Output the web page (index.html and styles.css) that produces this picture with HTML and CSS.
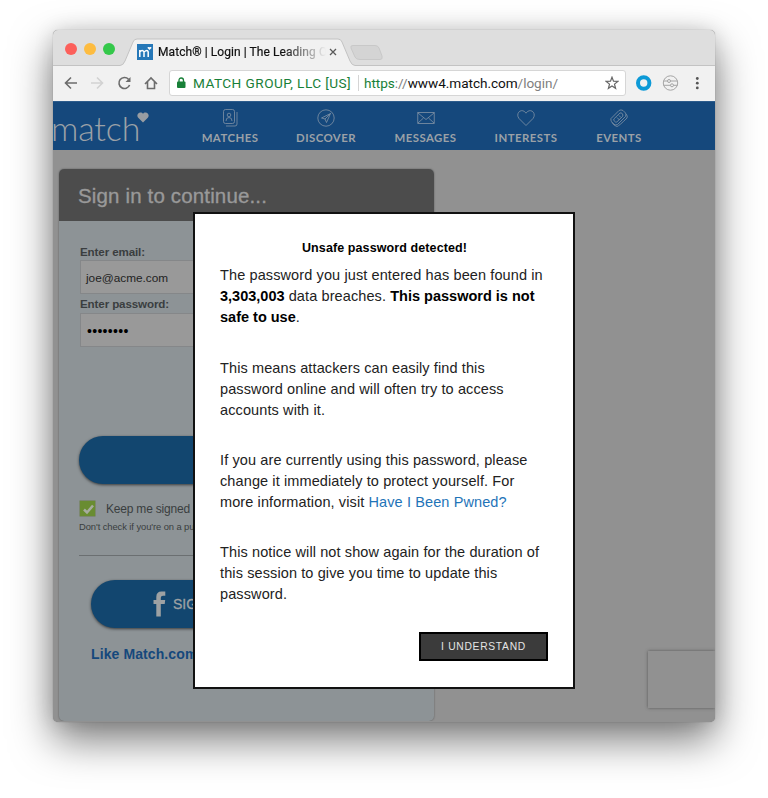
FILE: index.html
```html
<!DOCTYPE html>
<html lang="en">
<head>
<meta charset="utf-8">
<title>Match® | Login</title>
<link rel="stylesheet" href="styles.css">
</head>
<body>
<div class="window">
  <header class="tabs">
    <svg class="tab-shape" width="662" height="36" viewBox="0 0 662 36"><path d="M0 35.5H68C71 35 71 33 72 31L80 12Q81 9 84 9H285Q288 9 289 12L297 31Q299 35.5 302 35.5V36H0Z" fill="#f1f1f1"/><path d="M0 35.5H67Q70 35.500 72 31L80 12Q81 9 84 9H285Q288 9 289 12L297 31Q299 35.500 302 35.500H662" fill="none" stroke="#c3c3c3"/><path d="M300 15.500H322Q325 15.500 326 18L329 26Q330 29.500 327 29.500H307Q303 29.500 302 27L298 18Q297 15.500 300 15.500Z" fill="#d4d4d4" stroke="#c8c8c8"/></svg>
    <i class="dot red"></i><i class="dot yellow"></i><i class="dot green"></i>
    <svg class="favicon" width="16" height="16" viewBox="0 0 16 16"><rect width="16" height="16" fill="#2678b8"/><path d="M2.800 13V6M2.800 8Q5.500 5 7 8V13M7 8Q10.500 5 11.200 8V13" fill="none" stroke="#fff" stroke-width="1.500"/><path d="M12.500 6L10.500 4Q10.500 2.200 12.500 3.300Q14.500 2.200 14.500 4Z" fill="#fff"/></svg>
    <span class="tab-title">Match® | Login | The Leading O</span>
    <svg class="close" width="8" height="8" viewBox="0 0 8 8"><path d="M1 1L7 7M7 1L1 7" stroke="#5a5a5a" stroke-width="1.300"/></svg>
  </header>
  <div class="toolbar">
    <svg class="navicons" width="116" height="35" viewBox="53 66 116 35" fill="none" stroke="#6c6c6c" stroke-width="1.600"><path d="M77 83H65.500M71 77.500L65.500 83L71 88.500"/><path d="M91 83H102.500M97 77.500L102.500 83L97 88.500" stroke="#d2d2d2"/><path d="M128.500 79.200A5.500 5.500 0 1 0 129.600 85"/><path d="M130.500 77V82H125.500Z" fill="#6c6c6c" stroke="none"/><path d="M145 84L151 78L157 84M147.500 82V88.500H154.500V82"/></svg>
    <div class="address">
      <svg width="9" height="12" viewBox="0 0 9 12"><rect y="4.500" width="8.500" height="6.500" rx="1" fill="#188038"/><path d="M2 5V3.500Q2 1 4.250 1Q6.500 1 6.500 3.500V5" fill="none" stroke="#188038" stroke-width="1.300"/></svg>
      <span class="owner">MATCH GROUP, LLC [US]</span>
      <span class="url"><span class="secure">https</span><span class="dim">://</span>www4.match.com<span class="dim">/login/</span></span>
      <svg class="star" width="14" height="14" viewBox="0 0 14 14"><path d="M7 1.200L8.500 5.200L12.800 5.400L9.500 8.100L10.600 12.300L7 9.900L3.400 12.300L4.500 8.100L1.200 5.400L5.500 5.200Z" fill="none" stroke="#666" stroke-width="1.200"/></svg>
    </div>
    <svg class="extensions" width="89" height="35" viewBox="626 66 89 35" fill="none"><circle cx="643.700" cy="83" r="5.700" stroke="#0d9ad7" stroke-width="4"/><g stroke="#a5a5a5"><circle cx="670.500" cy="83" r="7.200"/><path d="M663.500 81H667.500M670.300 81H677.500M663.500 85.300H670.500M673.500 85.300H677.500"/><circle cx="669" cy="81" r="1.500"/><circle cx="672" cy="85.300" r="1.500"/></g><g fill="#555"><circle cx="697.300" cy="78.500" r="1.400"/><circle cx="697.300" cy="83.200" r="1.400"/><circle cx="697.300" cy="87.900" r="1.400"/></g></svg>
  </div>
  <nav class="site-nav">
    <div class="brand">match<svg width="12" height="11" viewBox="0 0 12 11"><path d="M6 10.500L1 5.500C-1 2.500 2-.8 5 .8L6 1.800L7 .8C10-.8 13 2.500 11 5.500Z" fill="#999da2"/></svg></div>
    <div class="item matches"><svg width="18" height="18" viewBox="0 0 18 18"><rect x="2.500" y=".5" width="11" height="14" rx="2"/><path d="M5 17H14Q16 17 16 15V3M5 12Q5 8.500 8 8.500Q11 8.500 11 12"/><circle cx="8" cy="6" r="1.800"/></svg><span>MATCHES</span></div>
    <div class="item discover"><svg width="18" height="18" viewBox="0 0 18 18"><circle cx="9" cy="9" r="8.200"/><path d="M13.500 4.500L4.500 9L8 10L9.500 13.500ZM13.500 4.500L8 10"/></svg><span>DISCOVER</span></div>
    <div class="item messages"><svg width="18" height="18" viewBox="0 0 18 18"><rect x=".8" y="3.500" width="16.400" height="11"/><path d="M1 4L9 10.500L17 4M1 14L6.500 9M17 14L11.500 9"/></svg><span>MESSAGES</span></div>
    <div class="item interests"><svg width="18" height="18" viewBox="0 0 18 18"><path d="M9 16.500L2 9.500C-1.500 5 3-.5 7.500 2.500L9 4.200L10.500 2.500C15-.5 19.500 5 16 9.500Z"/></svg><span>INTERESTS</span></div>
    <div class="item events"><svg width="18" height="18" viewBox="0 0 18 18"><path d="M1 9.500L9 1.500Q11 .3 13 1.500L15.500 4Q16.500 5.500 15.500 7.500L7.500 15.500Q5.500 16.500 4 15.300L1.500 12.700Q.5 11 1 9.500Z"/><path d="M3.800 10L10 4Q11 3.500 12.200 4.500Q13.500 6 12.500 7.500L6.800 13Q5.500 13.500 4.500 12.300Q3.500 11 3.800 10ZM7 8.500L9.500 11M9 6.500L11 8.500M2 13.500Q4 17 7 17.500Q9 17 17 9Q18 7 16 5"/></svg><span>EVENTS</span></div>
  </nav>
  <main class="page">
    <section class="login">
      <h1><span>Sign in to continue...</span></h1>
      <div class="form">
        <label class="lb1">Enter email:</label>
        <div class="field"><span>joe@acme.com</span></div>
        <label class="lb2">Enter password:</label>
        <div class="field pass"><span>••••••••</span></div>
        <div class="pill primary"></div>
        <div class="keep"><svg width="17" height="17" viewBox="0 0 17 17"><rect x=".5" y=".5" width="16" height="16" rx="1" fill="#698c31" stroke="#7c8770"/><path d="M5 9.500L8 12.500L14 5.500" fill="none" stroke="#a7ac9f" stroke-width="2.500"/></svg><span>Keep me signed in</span></div>
        <p class="hint">Don't check if you're on a public</p>
        <hr>
        <div class="pill facebook"><svg width="13" height="26" viewBox="0 0 13 26"><path d="M3.300 25.500V13H.5V9H3.300V6Q3.300 .5 8.500 .5H12.300V4.700H10Q7.800 4.700 7.800 6.700V9H12.200L11.700 13H7.800V25.500Z" fill="#9da1a3"/></svg><span>SIGN</span></div>
        <p class="like">Like Match.com</p>
      </div>
    </section>
    <aside class="captcha"></aside>
  </main>
  <div class="modal" role="dialog">
    <h2>Unsafe password detected!</h2>
    <p>The password you just entered has been found in<br><b>3,303,003</b> data breaches. <b>This password is not</b><br><b>safe to use</b>.</p>
    <p>This means attackers can easily find this<br>password online and will often try to access<br>accounts with it.</p>
    <p>If you are currently using this password, please<br>change it immediately to protect yourself. For<br>more information, visit <a>Have I Been Pwned?</a></p>
    <p>This notice will not show again for the duration of<br>this session to give you time to update this<br>password.</p>
    <button>I UNDERSTAND</button>
  </div>
</div>
</body>
</html>
```
FILE: styles.css
```css
* { box-sizing: border-box; }
body { margin: 0; padding: 30px 53px 77px; height: 798px; overflow: hidden; background: #fff; font-family: "Liberation Sans", Arial, sans-serif; }
svg { display: block; flex: none; }
.window { position: relative; width: 662px; height: 692px; border-radius: 5px; background: #919191; box-shadow: 0 0 1px rgba(0,0,0,.4), 0 18px 42px rgba(0,0,0,.52), 0 0 20px rgba(0,0,0,.12); clip-path: inset(-30px -53px -77px -53px); }
.tabs { position: relative; display: flex; align-items: center; height: 36px; padding: 8px 0 0 12px; background: #dedede; border-radius: 5px 5px 0 0; }
.tab-shape { position: absolute; left: 0; top: 0; }
.dot { position: relative; top: -3px; width: 12px; height: 12px; margin-right: 7px; border-radius: 50%; background: #fc605b; }
.yellow { background: #fdbc40; }
.green { background: #34c84a; margin-right: 22px; }
.favicon, .tab-title, .close { position: relative; }
.tab-title { width: 169px; margin-left: 5px; font: 12px/16px Roboto, sans-serif; letter-spacing: .07px; white-space: nowrap; color: #111; -webkit-text-stroke: .2px #111; -webkit-mask-image: linear-gradient(90deg, #000 125px, transparent 168px); mask-image: linear-gradient(90deg, #000 125px, transparent 168px); }
.close { margin-left: 2px; }
.toolbar { display: flex; height: 35px; background: #f1f1f1; }
.address { display: flex; align-items: center; width: 458px; height: 26px; margin-top: 4px; padding: 0 6px 0 7px; background: #fff; border: 1px solid #d6d6d6; border-radius: 3px; font: 13.6px/18px Roboto, sans-serif; white-space: nowrap; color: #111; }
.owner { margin-left: 7px; width: 160px; letter-spacing: .46px; color: #188038; }
.url { margin-left: 5px; padding-left: 5px; border-left: 1px solid #d5d5d5; line-height: 16px; letter-spacing: -.05px; }
.secure { color: #188038; }
.dim { color: #808080; }
.star { margin-left: auto; }
.site-nav { display: flex; height: 49px; background: #15487c; color: #9ba1a7; border-top: 1px solid #2d5c8c; }
.brand { position: relative; display: flex; width: 130px; font: 300 34px/51px Lato, sans-serif; letter-spacing: -.15px; text-indent: -2px; }
.brand svg { margin: 10px 0 0 -3px; }
.item { display: flex; flex-direction: column; align-items: center; padding-top: 7px; font: 700 11.4px/16px Lato, sans-serif; letter-spacing: .45px; }
.matches { width: 94px; }
.discover { width: 98px; }
.messages { width: 101px; }
.interests { width: 100px; }
.events { width: 86px; }
.item svg { fill: none; stroke: #8293a6; stroke-width: .8; margin-bottom: 3px; }
.page { position: relative; display: flex; justify-content: space-between; height: 571px; padding: 19px 0 0 6px; overflow: hidden; background: #919191; border-radius: 0 0 5px 5px; }
.login { width: 375px; height: 552px; background: #8d9396; border-radius: 5px; box-shadow: 0 0 2px rgba(0,0,0,.4); }
h1 { display: flex; align-items: center; height: 52px; margin: 0; padding: 2px 0 0 19px; background: #4c4c4c; border-radius: 5px 5px 0 0; color: #999; font-size: 20.5px; letter-spacing: .15px; font-weight: 400; -webkit-text-stroke: .35px #999; }
.form { display: flex; flex-direction: column; padding: 21px 20px 0 20px; color: #3a3e40; }
label { display: block; height: 18px; margin-left: 1px; font-size: 11.6px; letter-spacing: -.12px; line-height: 19px; font-weight: 700; }
.lb2 { height: 19px; }
.field { display: flex; align-items: center; height: 34px; margin-left: 1px; padding-left: 5px; background: #999; border: 1px solid #858789; color: #222; font-size: 11.8px; }
.field span { padding-top: 1px; }
.pass { color: #000; font-size: 14px; letter-spacing: .3px; padding-left: 6px; }
.pill { display: flex; align-items: center; height: 48px; border-radius: 24px; background: #12466f; box-shadow: 0 1px 3px rgba(0,0,0,.6); color: #9da1a3; }
.primary { margin-top: 89px; }
.keep { display: flex; align-items: center; height: 17px; margin-top: 16px; gap: 10px; font-size: 12px; letter-spacing: -.2px; white-space: nowrap; }
.hint { margin: 2px 0 0; font-size: 9.4px; letter-spacing: -.08px; line-height: 15px; white-space: nowrap; }
hr { width: 100%; margin: 21px 0 24px; border: 0; border-top: 1px solid #6b6f71; }
.facebook { margin: 0 11px 0 12px; padding-left: 62px; gap: 7px; font-size: 14px; -webkit-text-stroke: .3px #9da1a3; }
.like { margin: 17px 0 0 12px; color: #15487c; font-size: 14px; letter-spacing: .1px; line-height: 18px; font-weight: 700; }
.captcha { width: 67px; height: 57px; margin-top: 482px; box-shadow: 0 0 3px #555; background: #919191; }
.modal { position: absolute; left: 140px; top: 182px; width: 382px; height: 477px; padding: 24px 24px 0 25px; border: 2px solid #111; background: #fff; color: #222; font-size: 14.5px; line-height: 21px; white-space: nowrap; }
.modal h2 { margin: 0 0 6px; text-align: center; font-size: 12.5px; letter-spacing: .1px; line-height: 21px; color: #000; }
.modal p { margin: 0 0 29.3px; letter-spacing: .11px; }
.modal p:nth-of-type(1) { margin-bottom: 29.6px; }
.modal b { color: #000; letter-spacing: 0; }
.modal a { color: #1f74b8; }
.modal button { display: block; width: 129px; height: 29px; margin: -2px 1px 0 auto; padding: 0; border: 2px solid #000; background: #3b3b3b; color: #e5e5e5; font: 10.3px "Liberation Sans", sans-serif; letter-spacing: .7px; }
```
